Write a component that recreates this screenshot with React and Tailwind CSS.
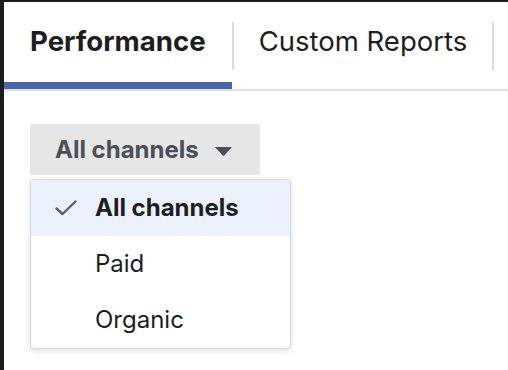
import React from "react";

const Check = () => (
  <svg width="22" height="16" viewBox="0 0 22 16" fill="none">
    <path d="M1.5 8.5 L7.5 14 L20.5 1.5" stroke="#5b5f66" strokeWidth="2.4" strokeLinecap="round" strokeLinejoin="round" />
  </svg>
);

const Caret = () => (
  <svg width="19" height="10" viewBox="0 0 19 10">
    <path d="M1 1 H18 L10.5 9.2 Q9.5 10.2 8.5 9.2 Z" fill="#4b4f56" />
  </svg>
);

const App = () => {
  const items = ["All channels", "Paid", "Organic"];
  return (
    <div className="w-[508px] h-[370px] bg-white border-t-2 border-l-[4px] border-[#1c1c1e] font-['Inter',sans-serif] overflow-hidden">
      <div className="flex h-[89px] border-b-2 border-[#dddfe2]">
        <div className="flex items-center px-[26px] border-b-[7px] border-[#4867aa] text-[27.6px] font-bold text-[#1c1e21]">
          Performance
        </div>
        <div className="w-[2px] h-[48px] bg-[#d8dadf] self-center"></div>
        <div className="flex items-center px-[25px] border-b-[7px] border-transparent text-[27.5px] text-[#1c1e21]">
          Custom Reports
        </div>
        <div className="w-[2px] h-[48px] bg-[#d8dadf] self-center"></div>
      </div>

      <div className="pl-[26px] pt-[33px]">
        <div className="w-[230px] h-[51px] bg-[#e6e6e6] rounded-[3px] flex items-center pl-[25px] text-[24px] font-bold text-[#4b4f56]">
          <span>All channels</span>
          <span className="ml-[15px] mt-[2px]">
            <Caret />
          </span>
        </div>

        <div className="mt-[4px] w-[261px] border border-[#d3d6db] rounded-[4px] shadow-[0_2px_6px_rgba(0,0,0,0.12)] bg-white overflow-hidden">
          {items.map((item, i) => (
            <div
              key={item}
              className={
                i === 0
                  ? "h-[56px] flex items-center bg-[#ebf2fd] text-[24px] font-bold text-[#1c1e21]"
                  : "h-[56px] flex items-center text-[24px] text-[#1c1e21]"
              }
            >
              <div className="w-[64px] pl-[24px] flex items-center">
                {i === 0 ? <Check /> : null}
              </div>
              <span>{item}</span>
            </div>
          ))}
        </div>
      </div>
    </div>
  );
};

export default App;
